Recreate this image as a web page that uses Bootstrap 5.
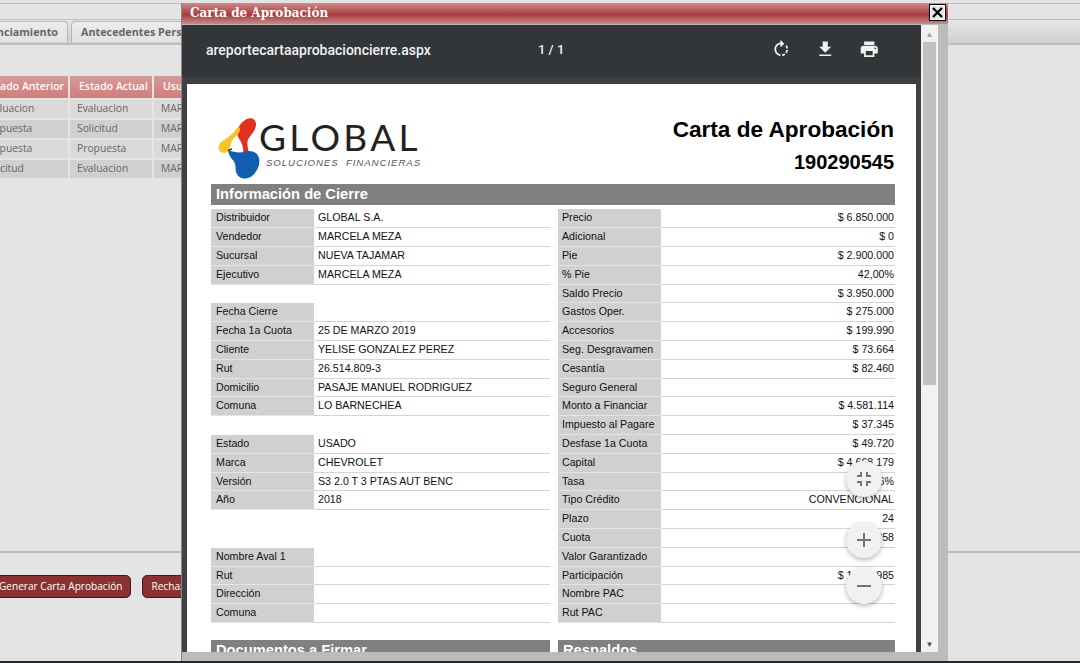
<!DOCTYPE html>
<html lang="es">
<head>
<meta charset="utf-8">
<title>Carta de Aprobación</title>
<link href="https://cdn.jsdelivr.net/npm/bootstrap@5.3.0/dist/css/bootstrap.min.css" rel="stylesheet">
<style>
html,body{height:663px;overflow:hidden}
body{background:#e4e4e4;font-family:"Open Sans",sans-serif;color:#666;position:relative}
.pg-top{height:17px;margin-top:3px;border-top:1px solid #bdbdbd;border-bottom:1px solid #bdbdbd}
.pg-tabs{height:25px;background:linear-gradient(#e6e6e6,#cfcfcf);border-bottom:2px solid #bdbdbd;margin-left:-68px;padding-top:1px;gap:3px}
.pg-tab{height:21px;background:linear-gradient(#ececec,#e2e2e2);border:1px solid #b5b5b5;border-bottom:0;border-radius:4px 4px 0 0;font:700 10.8px "Open Sans",sans-serif;color:#666;padding:2px 9px 0;white-space:nowrap}
.pg-tab-a{width:136px;text-align:right}
.pg-tbl{margin:29px 0 0 -26px;border-collapse:separate;border-spacing:2px}
.pg-tbl th{background:linear-gradient(#cf9c9c,#d98a8a 45%,#cb8080);color:#fff;font-size:10.5px;font-weight:600;height:22px;padding:0 0 0 9px;white-space:nowrap}
.pg-tbl td{background:#d0d0d0;font-size:10.3px;height:18px;padding:0 0 0 7px;white-space:nowrap}
.pg-tbl tr:nth-child(odd) td{background:#d9d9d9}
.col-ant{width:92px}
.col-act{width:82px}
.col-usu{width:90px}
.pg-foot{position:absolute;left:0;right:0;top:551px;border-top:2px solid #bdbdbd;padding:22px 0 0 0;gap:11px;margin-left:-10px}
.pg-btn{background:#8a3232;color:#fff;border:1px solid #3d1c1c;border-radius:5px;font-size:10.1px;height:23px;padding:0 8px;line-height:20px;white-space:nowrap}
.pg-strip{position:absolute;left:0;right:0;bottom:0;height:2px;background:#1f2b33}
.dlg{position:absolute;left:181px;top:3px;width:767px;height:658px;background:#bbb;border-left:1px solid #888}
.dlg-title{height:21px;background:linear-gradient(#cf8a8a,#a63c3c 55%,#c98a8a);color:#fff;font:bold 12px "DejaVu Serif",serif;padding:3px 0 0 8px}
.dlg-x{position:absolute;right:2px;top:1px;width:17px;height:17px;background:#e4e4e4;border:1px solid #000;box-shadow:inset 0 0 0 1px #fff}
.dlg-body{height:628px;margin-top:1px}
.vw{width:739px;background:#3f4144;overflow:hidden;height:627px;position:relative}
.vw-bar{height:49px;background:#323639;color:#f1f1f1;font:500 14px Roboto,sans-serif;padding:0 0 0 24px;box-shadow:0 2px 4px rgba(0,0,0,.3)}
.vw-name{width:332px}
.vw-page{width:233px;font-size:13px}
.vw-icons{gap:23.500px}
.vw-icons svg{display:block;width:20.500px;height:20.500px;fill:#f1f1f1}
.sheet{margin:10px 5px 0;height:700px;background:#fff;padding:33px 21px 0 24px;font:10.67px "Liberation Sans",sans-serif;color:#111}
.sh-head{height:67px}
.logo{margin-top:-7px;margin-left:1px}
.logo svg{display:block;flex:none}
.logo-main{font:400 37px/1 Lato,sans-serif;color:#222;padding-top:8px;letter-spacing:3.300px;margin-left:-3px}
.logo-sub{font:italic 9.600px/1 "Liberation Sans",sans-serif;letter-spacing:.97px;color:#555;margin:3px 0 0 4px;white-space:nowrap}
.sh-h1{font-weight:700;font-size:22.600px;line-height:26px;text-align:right;color:#000;padding-right:1px}
.sh-h2{font-weight:700;font-size:20px;line-height:23px;text-align:right;color:#000;margin-top:8px;padding-right:1px}
.sec{background:#808080;color:#fff;font-weight:700;font-size:14.700px;height:21px;line-height:20px;padding-left:5px}
.cols{gap:8px;margin-top:4.400px}
.col-l{width:339px}
.col-r{width:337px}
.fila{height:18.800px;line-height:17px;display:flex}
.fila b{font-weight:400;width:103px;background:#d0d0d0;padding-left:5px;color:#111;border-bottom:1px solid #e4e4e4}
.col-r .fila b{padding-left:4px}
.fila span{flex:1;padding-left:4px;border-bottom:1px solid #d4d4d4;white-space:nowrap}
.col-r .fila span{text-align:right;padding:0 1px 0 0}
.fila.vacia b,.fila.vacia span{background:none;border:0}
.sec2{margin-top:16.600px;gap:8px}
.fab{position:absolute;width:36px;height:36px;border-radius:50%;background:#f1f1f1;box-shadow:0 2px 5px rgba(0,0,0,.28);left:664px}
.fab svg{display:block;margin:6px;width:24px;height:24px;fill:#757575}
.fab-a{top:436px}
.fab-b{top:497px}
.fab-c{top:543px}
.sb{width:17px;background:#f1f1f1;height:627px}
.sb-btn{height:17px;font-size:8px;line-height:17px;text-align:center}
.sb-up{color:#a3a3a3}
.sb-dn{color:#505050}
.sb-track{flex:1}
.sb-thumb{height:343px;background:#c1c1c1;margin:0 2px}
</style>
</head>
<body>
<div class="pg-top"></div>
<div class="pg-tabs d-flex">
  <div class="pg-tab pg-tab-a">Financiamiento</div>
  <div class="pg-tab">Antecedentes Personales</div>
</div>
<table class="pg-tbl">
  <thead><tr><th class="col-ant">Estado Anterior</th><th class="col-act">Estado Actual</th><th class="col-usu">Usuario</th></tr></thead>
  <tbody>
    <tr><td>Evaluacion</td><td>Evaluacion</td><td>MARCELA</td></tr>
    <tr><td>Propuesta</td><td>Solicitud</td><td>MARCELA</td></tr>
    <tr><td>Propuesta</td><td>Propuesta</td><td>MARCELA</td></tr>
    <tr><td>Solicitud</td><td>Evaluacion</td><td>MARCELA</td></tr>
  </tbody>
</table>
<div class="pg-foot d-flex align-items-start">
  <div class="pg-btn">Generar Carta Aprobación</div>
  <div class="pg-btn">Rechazar</div>
</div>
<div class="pg-strip"></div>

<div class="dlg">
  <div class="dlg-title">Carta de Aprobación</div>
  <div class="dlg-x"><svg viewBox="0 0 15 15" width="15" height="15" class="d-block"><path d="M3 3l9 9M12 3l-9 9" stroke="#000" stroke-width="2.200" fill="none"/></svg></div>
  <div class="dlg-body d-flex">
    <div class="vw">
      <div class="vw-bar d-flex align-items-center">
        <div class="vw-name">areportecartaaprobacioncierre.aspx</div>
        <div class="vw-page">1 / 1</div>
        <div class="vw-icons d-flex">
          <svg viewBox="0 0 24 24"><path d="M15.550 5.550L11 1v3.070C7.060 4.560 4 7.920 4 12s3.050 7.440 7 7.930v-2.020c-2.840-.48-5-2.940-5-5.910s2.160-5.430 5-5.910V10l4.550-4.450zM19.930 11c-.17-1.390-.72-2.730-1.620-3.890l-1.420 1.420c.54.75.88 1.600 1.020 2.470h2.020zM13 17.900v2.020c1.390-.17 2.740-.71 3.900-1.610l-1.440-1.440c-.75.54-1.590.89-2.460 1.030zm3.890-2.420l1.420 1.410c.9-1.160 1.450-2.500 1.620-3.890h-2.020c-.14.87-.48 1.720-1.020 2.480z"/></svg>
          <svg viewBox="0 0 24 24"><path d="M19 9h-4V3H9v6H5l7 7 7-7zM5 18v2h14v-2H5z"/></svg>
          <svg viewBox="0 0 24 24"><path d="M19 8H5c-1.660 0-3 1.340-3 3v6h4v4h12v-4h4v-6c0-1.660-1.340-3-3-3zm-3 11H8v-5h8v5zm3-7c-.55 0-1-.45-1-1s.45-1 1-1 1 .45 1 1-.45 1-1 1zm-1-9H6v4h12V3z"/></svg>
        </div>
      </div>
      <div class="sheet">
        <div class="sh-head d-flex justify-content-between">
          <div class="logo d-flex">
            <svg width="50" height="70" viewBox="0 0 150 210">
              <path d="M76 62C82 40 105 20 122 26c14 6 12 26 2 40-10 14-18 22-18 34 0 12 4 20 4 28H94c0-16-4-28-10-38-6-10-10-18-8-28z" fill="#e2301f"/>
              <path d="M82 52c6 8-2 20-12 28-10 8-14 20-16 32-2 12-12 20-22 16-14-4-16-22-4-32 16-12 32-20 42-36 4-6 8-10 12-8z" fill="#f8c426"/>
              <path d="M48 120c16 6 34 10 50 5 18-5 38 0 43 20 5 22-8 44-24 55-16 10-38 6-44-12-4-12 0-24-8-35-6-8-15-15-17-33z" fill="#0f5fae"/>
              <path d="M48 121l12-4" stroke="#2a2a35" stroke-width="4" fill="none"/>
            </svg>
            <div>
              <div class="logo-main">GLOBAL</div>
              <div class="logo-sub">SOLUCIONES&nbsp; FINANCIERAS</div>
            </div>
          </div>
          <div>
            <div class="sh-h1">Carta de Aprobación</div>
            <div class="sh-h2">190290545</div>
          </div>
        </div>
        <div class="sec">Información de Cierre</div>
        <div class="cols d-flex">
          <div class="col-l">
            <div class="fila"><b>Distribuidor</b><span>GLOBAL S.A.</span></div>
            <div class="fila"><b>Vendedor</b><span>MARCELA MEZA</span></div>
            <div class="fila"><b>Sucursal</b><span>NUEVA TAJAMAR</span></div>
            <div class="fila"><b>Ejecutivo</b><span>MARCELA MEZA</span></div>
            <div class="fila vacia"><b></b><span></span></div>
            <div class="fila"><b>Fecha Cierre</b><span></span></div>
            <div class="fila"><b>Fecha 1a Cuota</b><span>25 DE MARZO 2019</span></div>
            <div class="fila"><b>Cliente</b><span>YELISE GONZALEZ PEREZ</span></div>
            <div class="fila"><b>Rut</b><span>26.514.809-3</span></div>
            <div class="fila"><b>Domicilio</b><span>PASAJE MANUEL RODRIGUEZ</span></div>
            <div class="fila"><b>Comuna</b><span>LO BARNECHEA</span></div>
            <div class="fila vacia"><b></b><span></span></div>
            <div class="fila"><b>Estado</b><span>USADO</span></div>
            <div class="fila"><b>Marca</b><span>CHEVROLET</span></div>
            <div class="fila"><b>Versión</b><span>S3 2.0 T 3 PTAS AUT BENC</span></div>
            <div class="fila"><b>Año</b><span>2018</span></div>
            <div class="fila vacia"><b></b><span></span></div>
            <div class="fila vacia"><b></b><span></span></div>
            <div class="fila"><b>Nombre Aval 1</b><span></span></div>
            <div class="fila"><b>Rut</b><span></span></div>
            <div class="fila"><b>Dirección</b><span></span></div>
            <div class="fila"><b>Comuna</b><span></span></div>
          </div>
          <div class="col-r">
            <div class="fila"><b>Precio</b><span>$ 6.850.000</span></div>
            <div class="fila"><b>Adicional</b><span>$ 0</span></div>
            <div class="fila"><b>Pie</b><span>$ 2.900.000</span></div>
            <div class="fila"><b>% Pie</b><span>42,00%</span></div>
            <div class="fila"><b>Saldo Precio</b><span>$ 3.950.000</span></div>
            <div class="fila"><b>Gastos Oper.</b><span>$ 275.000</span></div>
            <div class="fila"><b>Accesorios</b><span>$ 199.990</span></div>
            <div class="fila"><b>Seg. Desgravamen</b><span>$ 73.664</span></div>
            <div class="fila"><b>Cesantía</b><span>$ 82.460</span></div>
            <div class="fila"><b>Seguro General</b><span></span></div>
            <div class="fila"><b>Monto a Financiar</b><span>$ 4.581.114</span></div>
            <div class="fila"><b>Impuesto al Pagare</b><span>$ 37.345</span></div>
            <div class="fila"><b>Desfase 1a Cuota</b><span>$ 49.720</span></div>
            <div class="fila"><b>Capital</b><span>$ 4.668.179</span></div>
            <div class="fila"><b>Tasa</b><span>1,86%</span></div>
            <div class="fila"><b>Tipo Crédito</b><span>CONVENCIONAL</span></div>
            <div class="fila"><b>Plazo</b><span>24</span></div>
            <div class="fila"><b>Cuota</b><span>$ 258.358</span></div>
            <div class="fila"><b>Valor Garantizado</b><span></span></div>
            <div class="fila"><b>Participación</b><span>$ 1.100.985</span></div>
            <div class="fila"><b>Nombre PAC</b><span></span></div>
            <div class="fila"><b>Rut PAC</b><span></span></div>
          </div>
        </div>
        <div class="sec2 d-flex">
          <div class="sec col-l">Documentos a Firmar</div>
          <div class="sec col-r">Respaldos</div>
        </div>
      </div>
      <div class="fab fab-a"><svg viewBox="0 0 24 24"><path d="M5 16h3v3h2v-5H5v2zm3-8H5v2h5V5H8v3zm6 11h2v-3h3v-2h-5v5zm2-11V5h-2v5h5V8h-3z"/></svg></div>
      <div class="fab fab-b"><svg viewBox="0 0 24 24"><path d="M19 13h-6v6h-2v-6H5v-2h6V5h2v6h6v2z"/></svg></div>
      <div class="fab fab-c"><svg viewBox="0 0 24 24"><path d="M19 13H5v-2h14v2z"/></svg></div>
    </div>
    <div class="sb d-flex flex-column">
      <div class="sb-btn sb-up">&#9650;</div>
      <div class="sb-track"><div class="sb-thumb"></div></div>
      <div class="sb-btn sb-dn">&#9660;</div>
    </div>
  </div>
</div>
<script src="https://cdn.jsdelivr.net/npm/bootstrap@5.3.0/dist/js/bootstrap.bundle.min.js"></script>
</body>
</html>
